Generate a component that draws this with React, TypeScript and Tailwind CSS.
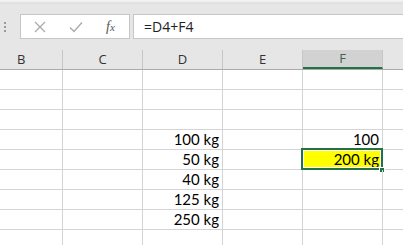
import React from 'react'

type Row = { d?: string; f?: string; selected?: boolean }

// rows visible under the header; row 4 and 5 hold the example values
const rows: Row[] = [
  {},
  {},
  {},
  { d: '100 kg', f: '100' },
  { d: '50 kg', f: '200 kg', selected: true },
  { d: '40 kg' },
  { d: '125 kg' },
  { d: '250 kg' },
  {},
]

const cellFont = { fontFamily: 'Lato, "Open Sans", "Liberation Sans", sans-serif' }

function Cell({ width, children, className = '' }: { width: string; children?: React.ReactNode; className?: string }) {
  return (
    <div className={`relative shrink-0 h-full border-r border-[#d4d4d4] flex items-center justify-end pr-[3px] text-[15px] text-black ${width} ${className}`}>
      {children}
    </div>
  )
}

export default function App() {
  return (
    <div className="w-[403px] h-[245px] overflow-hidden bg-white flex flex-col select-none" style={cellFont}>
      {/* ribbon shadow strip */}
      <div className="h-[4px] shrink-0 bg-gradient-to-b from-[#f7f7f7] to-[#dcdcdc]" />

      {/* formula bar */}
      <div className="h-[46px] shrink-0 bg-[#e6e6e6] flex items-start pt-[10px]">
        <div className="w-[20px] h-[25px] flex flex-col items-center justify-center gap-[2px] pl-[-1px]">
          <span className="w-[2px] h-[2px] bg-[#9a9a9a] -ml-[10px]" />
          <span className="w-[2px] h-[2px] bg-[#9a9a9a] -ml-[10px]" />
          <span className="w-[2px] h-[2px] bg-[#9a9a9a] -ml-[10px]" />
        </div>
        <div className="w-[110px] h-[25px] bg-white border border-[#c6c6c6] flex items-center">
          <svg width="12" height="12" viewBox="0 0 12 12" className="ml-[13px]">
            <path d="M1 1 L11 11 M11 1 L1 11" stroke="#ababab" strokeWidth="1.3" fill="none" />
          </svg>
          <svg width="14" height="12" viewBox="0 0 14 12" className="ml-[23px]">
            <path d="M1 6.5 L5 10.5 L13 1.5" stroke="#ababab" strokeWidth="1.4" fill="none" />
          </svg>
          <span
            className="ml-[23px] text-[14px] italic text-[#555]"
            style={{ fontFamily: '"Liberation Serif", "DejaVu Serif", serif' }}
          >
            f<span className="text-[11px]">x</span>
          </span>
        </div>
        <div className="ml-[3px] flex-1 h-[25px] bg-white border border-[#c6c6c6] border-r-0 flex items-center pl-[10px] text-[14px] text-[#222]" style={{ fontFamily: '"Open Sans", "Liberation Sans", sans-serif' }}>
          =D4+F4
        </div>
      </div>

      {/* column header */}
      <div className="h-[20px] shrink-0 bg-[#e6e6e6] flex border-b border-[#ababab] text-[13px] text-[#333]" style={{ fontFamily: '"Open Sans", "Liberation Sans", sans-serif' }}>
        <div className="w-[63px] shrink-0 h-full border-r border-[#c6c6c6] flex items-center pl-[17px]">B</div>
        {['C', 'D', 'E'].map((c) => (
          <div key={c} className="w-[80px] shrink-0 h-full border-r border-[#c6c6c6] flex items-center justify-center">{c}</div>
        ))}
        <div className="w-[80px] shrink-0 h-full border-r border-[#c6c6c6] bg-[#d2d2d2] border-b-2 border-b-[#217346] flex items-center justify-center text-[#3c6650]">F</div>
        <div className="flex-1 h-full" />
      </div>

      {/* grid */}
      <div className="flex flex-col">
        {rows.map((r, i) => (
          <div key={i} className="h-[20px] shrink-0 flex border-b border-[#d4d4d4]">
            <Cell width="w-[63px]" />
            <Cell width="w-[80px]" />
            <Cell width="w-[80px]">{r.d}</Cell>
            <Cell width="w-[80px]" />
            <Cell width="w-[80px]" className={r.selected ? 'bg-[#ffff00]' : ''}>
              {r.f}
              {r.selected && (
                <>
                  <span className="absolute -left-[2px] -top-[2px] -right-[1px] -bottom-[1px] border-2 border-[#217346] pointer-events-none">
                    <span className="absolute inset-0 border border-white" />
                  </span>
                  <span className="absolute -right-[3px] -bottom-[4px] w-[6px] h-[6px] bg-[#217346] border border-white" />
                </>
              )}
            </Cell>
            <div className="flex-1" />
          </div>
        ))}
      </div>
    </div>
  )
}
